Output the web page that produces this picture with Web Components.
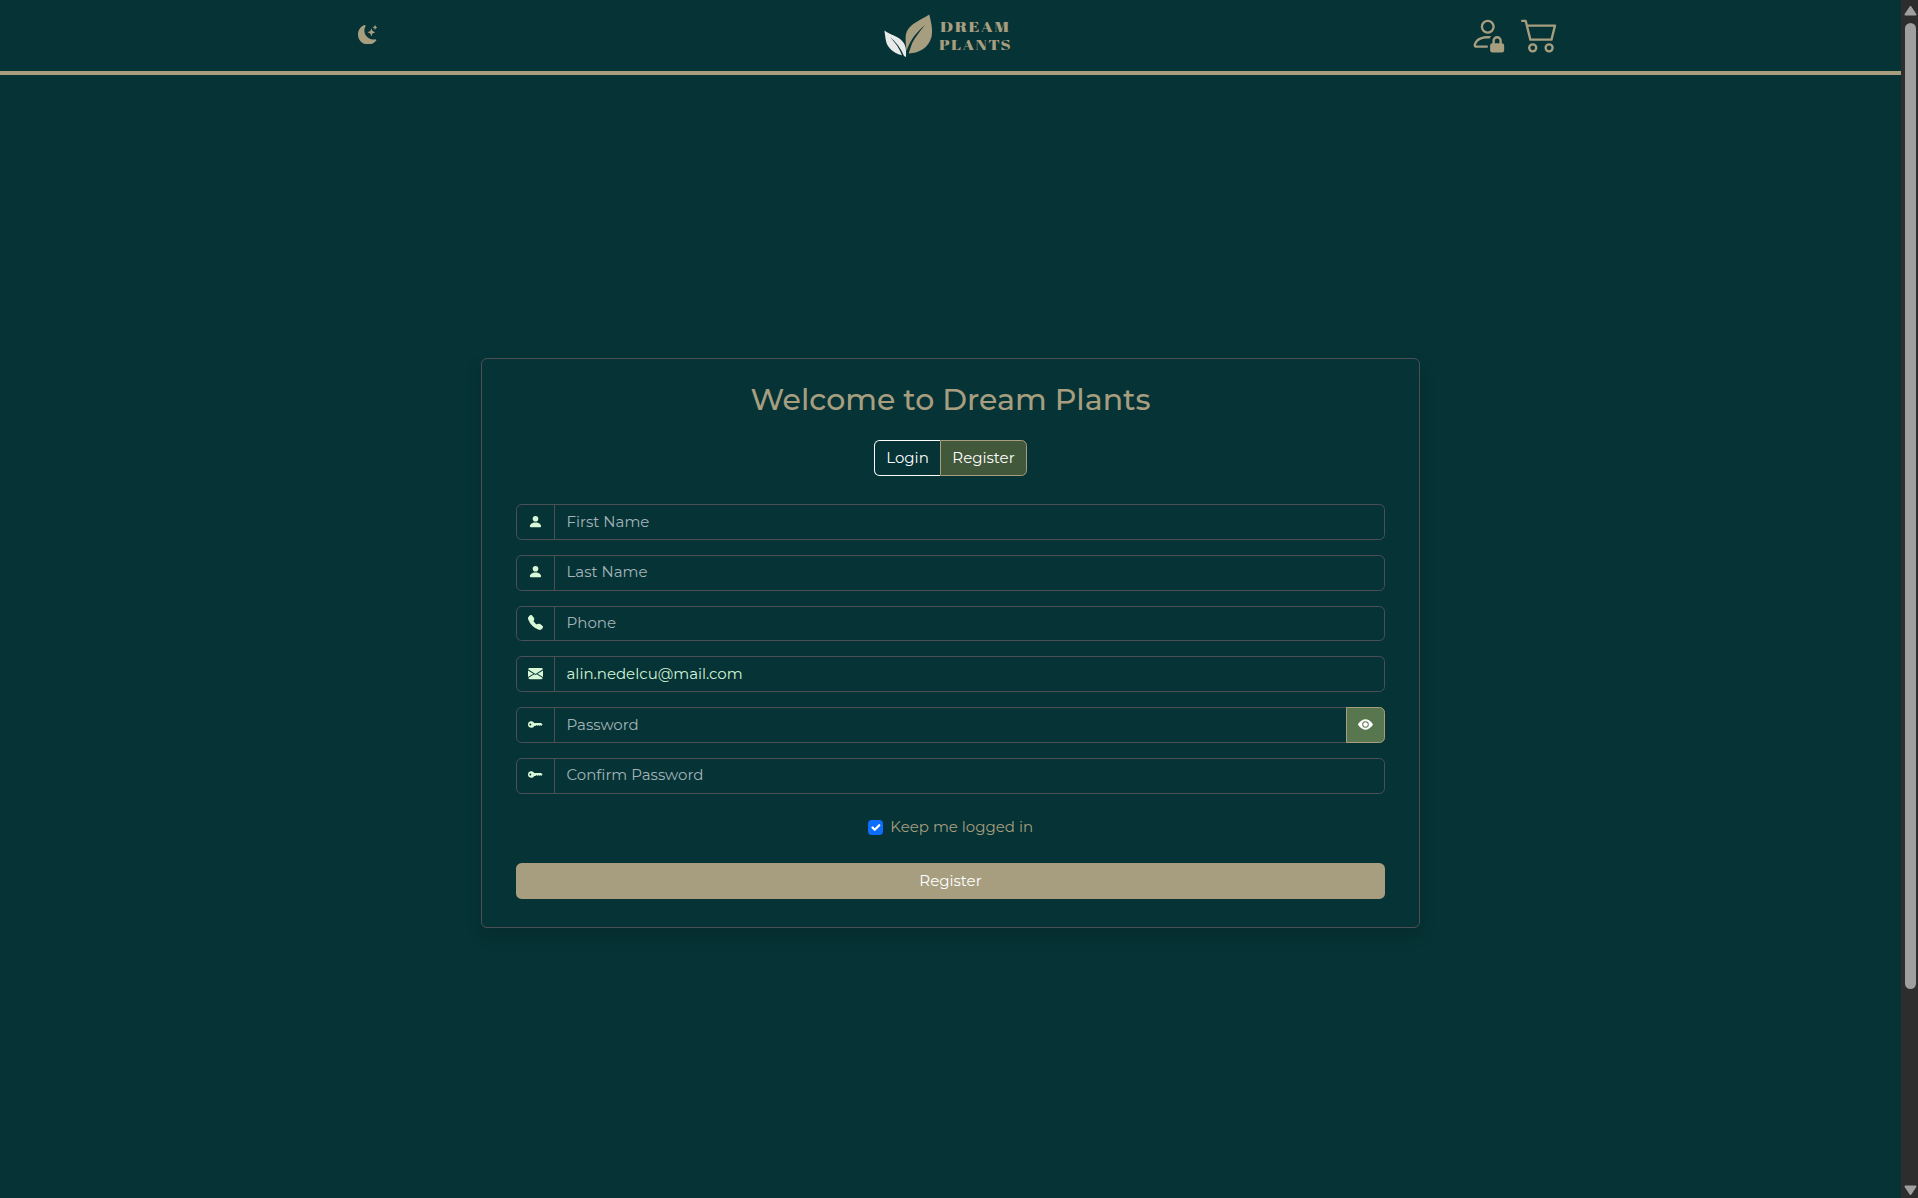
<!DOCTYPE html>
<html lang="en">
<head>
<meta charset="utf-8">
<title>Dream Plants</title>
<style>
html,body{margin:0;height:100%;overflow:hidden;background:#063335;font-family:Montserrat,Inter,"Noto Sans",sans-serif}
</style>
</head>
<body>
<plant-app></plant-app>
<script>
const ICONS={
moon:'<path d="M6 .278a.77.77 0 0 1 .08.858 7.2 7.2 0 0 0-.878 3.46c0 4.021 3.278 7.277 7.318 7.277q.792-.001 1.533-.16a.79.79 0 0 1 .81.316.73.73 0 0 1-.031.893A8.35 8.35 0 0 1 8.344 16C3.734 16 0 12.286 0 7.71 0 4.266 2.114 1.312 5.124.06A.75.75 0 0 1 6 .278"/><path d="M10.794 3.148a.217.217 0 0 1 .412 0l.387 1.162c.173.518.579.924 1.097 1.097l1.162.387a.217.217 0 0 1 0 .412l-1.162.387a1.73 1.73 0 0 0-1.097 1.097l-.387 1.162a.217.217 0 0 1-.412 0l-.387-1.162A1.73 1.73 0 0 0 9.31 6.593l-1.162-.387a.217.217 0 0 1 0-.412l1.162-.387a1.73 1.73 0 0 0 1.097-1.097zM13.863.099a.145.145 0 0 1 .274 0l.258.774c.115.346.386.617.732.732l.774.258a.145.145 0 0 1 0 .274l-.774.258a1.16 1.16 0 0 0-.732.732l-.258.774a.145.145 0 0 1-.274 0l-.258-.774a1.16 1.16 0 0 0-.732-.732l-.774-.258a.145.145 0 0 1 0-.274l.774-.258c.346-.115.617-.386.732-.732z"/>',
lock:'<path d="M11 5a3 3 0 1 1-6 0 3 3 0 0 1 6 0M8 7a2 2 0 1 0 0-4 2 2 0 0 0 0 4m0 5.996V14H3s-1 0-1-1 1-4 6-4q.845.002 1.544.107a4.5 4.5 0 0 0-.803.918A11 11 0 0 0 8 10c-2.29 0-3.516.68-4.168 1.332-.678.678-.83 1.418-.832 1.664zM9 13a1 1 0 0 1 1-1v-1a2 2 0 1 1 4 0v1a1 1 0 0 1 1 1v2a1 1 0 0 1-1 1h-4a1 1 0 0 1-1-1zm3-3a1 1 0 0 0-1 1v1h2v-1a1 1 0 0 0-1-1"/>',
cart:'<path d="M0 2.5A.5.5 0 0 1 .5 2H2a.5.5 0 0 1 .485.379L2.89 4H14.5a.5.5 0 0 1 .485.621l-1.5 6A.5.5 0 0 1 13 11H4a.5.5 0 0 1-.485-.379L1.61 3H.5a.5.5 0 0 1-.5-.5M3.14 5l1.25 5h8.22l1.25-5zM5 13a1 1 0 1 0 0 2 1 1 0 0 0 0-2m-2 1a2 2 0 1 1 4 0 2 2 0 0 1-4 0m9-1a1 1 0 1 0 0 2 1 1 0 0 0 0-2m-2 1a2 2 0 1 1 4 0 2 2 0 0 1-4 0"/>',
person:'<path d="M3 14s-1 0-1-1 1-4 6-4 6 3 6 4-1 1-1 1zm5-6a3 3 0 1 0 0-6 3 3 0 0 0 0 6"/>',
phone:'<path d="M1.885.511a1.745 1.745 0 0 1 2.61.163L6.29 2.98c.329.423.445.974.315 1.494l-.547 2.19a.68.68 0 0 0 .178.643l2.457 2.457a.68.68 0 0 0 .644.178l2.189-.547a1.75 1.75 0 0 1 1.494.315l2.306 1.794c.829.645.905 1.87.163 2.611l-1.034 1.034c-.74.74-1.846 1.065-2.877.702a18.6 18.6 0 0 1-7.01-4.42 18.6 18.6 0 0 1-4.42-7.009c-.362-1.03-.037-2.137.703-2.877z"/>',
mail:'<path d="M.05 3.555A2 2 0 0 1 2 2h12a2 2 0 0 1 1.95 1.555L8 8.414zM0 4.697v7.104l5.803-3.558zM6.761 8.83l-6.57 4.027A2 2 0 0 0 2 14h12a2 2 0 0 0 1.808-1.144l-6.57-4.027L8 9.586zm3.436-.586L16 11.801V4.697z"/>',
key:'<path d="M3.5 11.5a3.5 3.5 0 1 1 3.163-5H14L15.5 8 14 9.5l-1-1-1 1-1-1-1 1-1-1-1 1H6.663a3.5 3.5 0 0 1-3.163 2M2.5 9a1 1 0 1 0 0-2 1 1 0 0 0 0 2"/>',
eye:'<path d="M10.5 8a2.5 2.5 0 1 1-5 0 2.5 2.5 0 0 1 5 0"/><path d="M0 8s3-5.5 8-5.5S16 8 16 8s-3 5.5-8 5.5S0 8 0 8m8 3.5a3.5 3.5 0 1 0 0-7 3.5 3.5 0 0 0 0 7"/>'
};
const define=(name,html,ready)=>customElements.define(name,class extends HTMLElement{
  connectedCallback(){
    if(this.shadowRoot)return;
    this.attachShadow({mode:'open'}).innerHTML=typeof html==='function'?html(this):html;
    if(ready)ready(this);
  }
});

define('plant-icon',el=>`<style>:host{display:block;flex:none;width:${el.getAttribute('size')||15}px;height:${el.getAttribute('size')||15}px}svg{display:block;width:100%;height:100%}</style><svg viewBox="0 0 16 16" fill="currentColor">${ICONS[el.getAttribute('name')]}</svg>`);

/* Both words of the logo are stretched to their own width ("data-w"). */
define('plant-logo',`<style>
:host{display:flex;width:130px;height:45px}
svg{display:block;flex:none;width:48px;height:45px}
.name{display:flex;flex-direction:column;align-items:flex-start;gap:5px;font:400 14.800px/13px "Abril Fatface","Liberation Serif",serif;letter-spacing:1.200px;padding:6px 0 0 7.500px;color:#a79e80;white-space:nowrap}
.name div{transform-origin:0 50%}
.p{margin-left:-.8px}
</style>
<svg viewBox="0 0 48 45"><path fill="#a79e80" d="M45.3.5C37 6 27 9 22.800 17.500C20.600 23 22 30 22.500 37C24.500 31 27.500 25 33 18.800C36 15.500 38.500 13 41.500 10.500C36 17 31 23.500 28.200 29L24.600 39.400C36 39 44.500 33.500 47.500 23C49 15 47 7.500 45.300.5Z"/><path fill="#e9ebeb" d="M.4 16.500C6 21 14 21.500 19 28C22.300 32 22.300 37 22 43L20 42C17 34.500 12 28 6 23C11.500 29 15.500 34.500 18 41.300C8 39 2.500 32.500 1.600 25Z"/></svg>
<div class="name"><div class="d" data-w="70.5">DREAM</div><div class="p" data-w="73">PLANTS</div></div>`,el=>{
  for(const d of el.shadowRoot.querySelectorAll('[data-w]')){
    const n=d.getBoundingClientRect().width;
    if(n)d.style.transform=`scaleX(${d.dataset.w/n})`;
  }
});

define('plant-header',`<style>
:host{display:grid;grid-template-columns:526.500px 130px 1fr;box-sizing:border-box;height:75px;border-bottom:4px solid #a79e80;padding:0 342.500px 0 357.700px;color:#a79e80}
plant-icon[name=moon]{margin-top:24.700px}
plant-logo{margin-top:14px}
.r{display:flex;justify-content:flex-end;gap:15px;padding-top:15px}
</style><plant-icon name="moon" size="19.5"></plant-icon><plant-logo></plant-logo><div class="r"><plant-icon name="lock" size="37.5"></plant-icon><plant-icon name="cart" size="37.5"></plant-icon></div>`);

define('plant-field',el=>`<style>
:host{display:flex;box-sizing:border-box;height:35.750px;border:1px solid #4d4f57;border-radius:5.600px;color:${el.hasAttribute('filled')?'#d1f5d5':'#a3b3b9'}}
.i{display:flex;align-items:center;justify-content:center;box-sizing:border-box;width:38px;border-right:1px solid #4d4f57;color:#d8f8d8}
.i plant-icon{margin-top:-${2*el.getAttribute('lift')}px}
.t{flex:1;display:flex;align-items:center;padding:0 0 .8px 11.500px}
</style><div class="i"><plant-icon name="${el.getAttribute('icon')}"></plant-icon></div><div class="t"><slot></slot></div><slot name="action"></slot>`);

define('plant-eye',`<style>:host{display:flex;align-items:center;justify-content:center;box-sizing:border-box;width:39px;margin:-1px;padding-bottom:1.400px;border:1px solid #a79e80;border-radius:0 5.600px 5.600px 0;background:#59774f;color:#fff}</style><plant-icon name="eye"></plant-icon>`);

define('plant-tabs',`<style>
:host{display:flex;width:153px;height:36px;color:#fff}
div{display:flex;align-items:center;justify-content:center;box-sizing:border-box;height:36px}
.a{width:66px;border:1px solid #fff;border-right:0;border-radius:5.600px 0 0 5.600px}
.b{width:87px;border:1px solid #a79e80;border-radius:0 5.600px 5.600px 0;background:#42583b}
</style><div class="a"><slot name="login"></slot></div><div class="b"><slot name="register"></slot></div>`);

define('plant-check',`<style>
:host{display:flex;align-items:center;height:22px;gap:7.500px;color:#a79e80}
i{width:15px;height:15px;border-radius:3.750px;background:#0d6efd}svg{display:block}
</style><i><svg width="15" height="15" viewBox="0 0 20 20"><path fill="none" stroke="#fff" stroke-linecap="round" stroke-linejoin="round" stroke-width="3" d="m6 10 3 3 6-6"/></svg></i><slot></slot>`);

define('plant-button',`<style>:host{display:flex;align-items:center;justify-content:center;height:36px;border-radius:5.600px;background:#a79e80;color:#fff}</style><slot></slot>`);

define('plant-card',`<style>
:host{display:flex;flex-direction:column;align-items:center;box-sizing:border-box;width:939px;height:570px;border:1px solid #4d4f57;border-radius:6px;box-shadow:0 8px 16px rgba(0,0,0,.15);padding:0 34px;font-size:15px;line-height:22px}
h1{font-size:30px;line-height:36px;font-weight:500;color:#a79e80;margin:23px 0 22px}
.f{align-self:stretch;display:flex;flex-direction:column;gap:15px;margin-top:28.200px}
plant-check{margin-top:22.500px}
plant-button{align-self:stretch;margin-top:24.700px}
</style>
<h1>Welcome to Dream Plants</h1>
<plant-tabs><span slot="login">Login</span><span slot="register">Register</span></plant-tabs>
<div class="f">
<plant-field icon="person" lift=".5"><span>First Name</span></plant-field>
<plant-field icon="person" lift="1.2"><span>Last Name</span></plant-field>
<plant-field icon="phone" lift="1.2"><span>Phone</span></plant-field>
<plant-field icon="mail" lift=".6" filled><span>alin.nedelcu@mail.com</span></plant-field>
<plant-field icon="key" lift=".8"><span>Password</span><plant-eye slot="action"></plant-eye></plant-field>
<plant-field icon="key" lift="1.5"><span>Confirm Password</span></plant-field>
</div>
<plant-check><span>Keep me logged in</span></plant-check>
<plant-button><span>Register</span></plant-button>`);

define('page-scrollbar',`<style>
:host{display:flex;flex-direction:column;align-items:center;box-sizing:border-box;width:17px;height:1198px;padding:6px 0 3px 2px;background:#2d2d2d}
svg{display:block;flex:none}
div{width:11px;height:966px;border-radius:5.500px;background:#9f9f9f;margin:7px 0 auto}
</style><svg width="13" height="10"><path d="M6.500 1 11.500 8.500H1.500Z" fill="#9f9f9f" stroke="#9f9f9f" stroke-width="2" stroke-linejoin="round"/></svg><div></div><svg width="13" height="10"><path d="M6.500 9 11.500 1.500H1.500Z" fill="#9f9f9f" stroke="#9f9f9f" stroke-width="2" stroke-linejoin="round"/></svg>`);

define('plant-app',`<style>
:host{display:flex;width:1918px;height:1198px}
main{width:1901px;display:flex;flex-direction:column}
plant-card{margin:283px 0 0 481px}
</style><main><plant-header></plant-header><plant-card></plant-card></main><page-scrollbar></page-scrollbar>`);
</script>
</body>
</html>
